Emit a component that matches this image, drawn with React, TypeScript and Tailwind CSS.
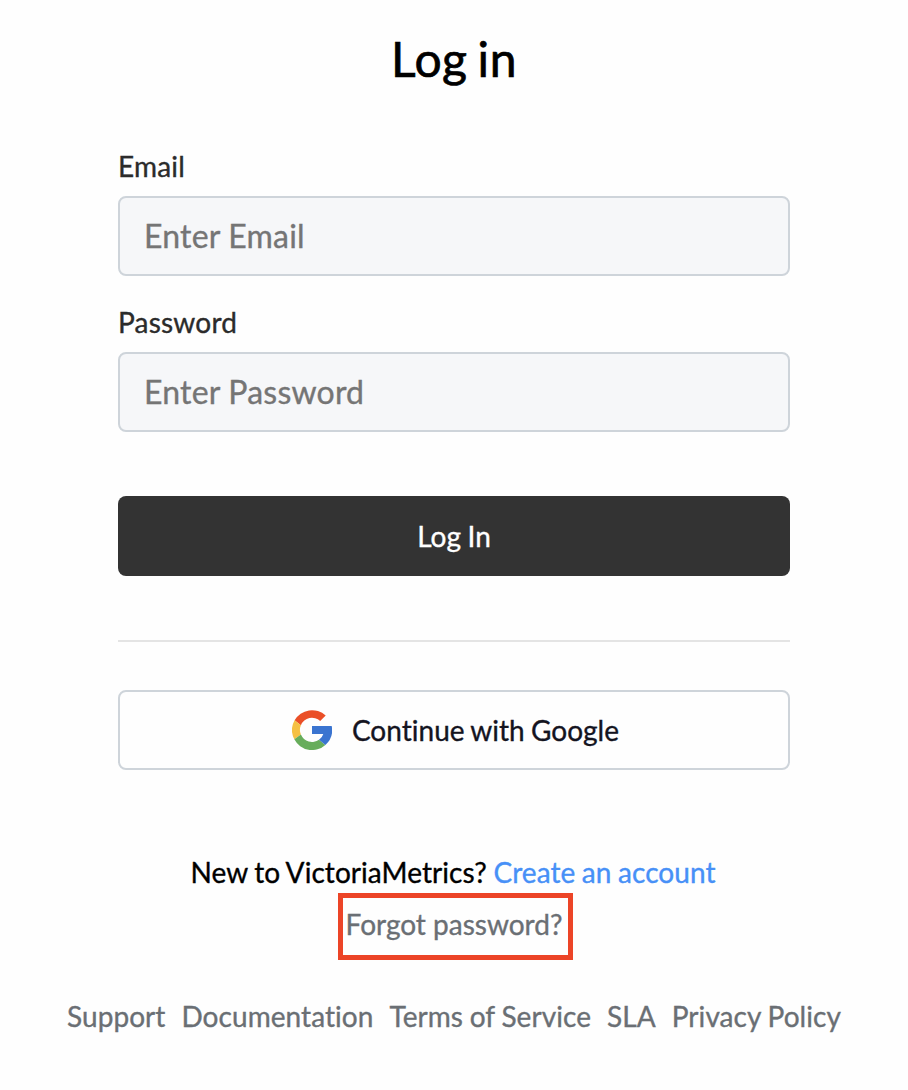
import React from "react";

function Field({ id, label, type }: { id: string; label: string; type: string }) {
  return (
    <div className="flex flex-col">
      <label htmlFor={id} className="h-[44px] text-[28px] leading-[28px] tracking-[0.2px] text-[#2b2b2b]">{label}</label>
      <input
        id={id}
        type={type}
        placeholder={"Enter " + label}
        className="h-[80px] w-full rounded-lg border-2 border-[#ced4da] bg-[#f6f7f9] px-6 pb-[2px] text-[32px] tracking-[0.2px] placeholder:text-[#757575] placeholder:opacity-100"
      />
    </div>
  );
}

function GoogleLogo() {
  return (
    <svg viewBox="0 0 40 40" className="h-[40px] w-[40px]">
      <path fill="#ea4f27" d="M2.600 10.300A20 20 0 0 1 33.700 5.600L28.200 11.100A12 12 0 0 0 8.900 15.200Z" />
      <path fill="#f5c043" d="M2.600 10.300A20 20 0 0 0 2.300 29.300L8.900 24.600A12 12 0 0 1 8.900 15.200Z" />
      <path fill="#67ad5b" d="M2.300 29.300A20 20 0 0 0 33.400 34.900L27 29.700A12 12 0 0 1 8.900 24.600Z" />
      <path fill="#3a74d0" d="M20 16H39.700A20 20 0 0 1 33.400 34.900L27 29.700A10 10 0 0 0 31.300 24H20Z" />
    </svg>
  );
}

const links = ["Support", "Documentation", "Terms of Service", "SLA", "Privacy Policy"];

export default function App() {
  return (
    <main className="flex h-[1090px] w-[908px] flex-col items-center bg-[#fefefe] pt-[29px] font-['Lato',sans-serif] text-[28px] text-black [font-variant-ligatures:none] [-webkit-text-stroke:0.35px_currentColor]">
      <h1 className="text-[48px] leading-[60px] tracking-[0.6px] [word-spacing:-3px] [-webkit-text-stroke:0.7px_currentColor]">Log in</h1>
      <form className="mt-[63px] flex w-[672px] flex-col gap-8">
        <Field id="email" label="Email" type="email" />
        <Field id="password" label="Password" type="password" />
        <button type="button" className="mt-[32px] h-[80px] rounded-lg bg-[#333333] tracking-[0.1px] text-white [word-spacing:-1px]">Log In</button>
      </form>
      <hr className="mt-[64px] w-[672px] border-t-2 border-[#e4e4e4]" />
      <button type="button" className="mt-[48px] flex h-[80px] w-[672px] items-center justify-center gap-[20px] rounded-lg border-2 border-[#ced4da] bg-[#fefefe] pl-[3px] text-[#14141f]">
        <GoogleLogo />
        <span className="tracking-[0.03px] [word-spacing:-1px]">Continue with Google</span>
      </button>
      <p className="mt-[81px] mr-[2px] whitespace-nowrap leading-[42px] tracking-[0.06px] [word-spacing:-0.7px]">
        New to VictoriaMetrics? <a className="text-[#4790f7]">Create an account</a>
      </p>
      <div className="ml-[3px] flex h-[67px] w-[235px] items-center justify-center whitespace-nowrap border-[5px] border-[#ec4427] pr-[3px] pb-[5px] text-[#6a6f74]">
        <a>Forgot password?</a>
      </div>
      <footer className="mt-[35px] flex gap-4 whitespace-nowrap leading-[42px] tracking-[0.06px] text-[#6a6f74] [word-spacing:-0.5px]">
        {links.map((l) => <a key={l}>{l}</a>)}
      </footer>
    </main>
  );
}
